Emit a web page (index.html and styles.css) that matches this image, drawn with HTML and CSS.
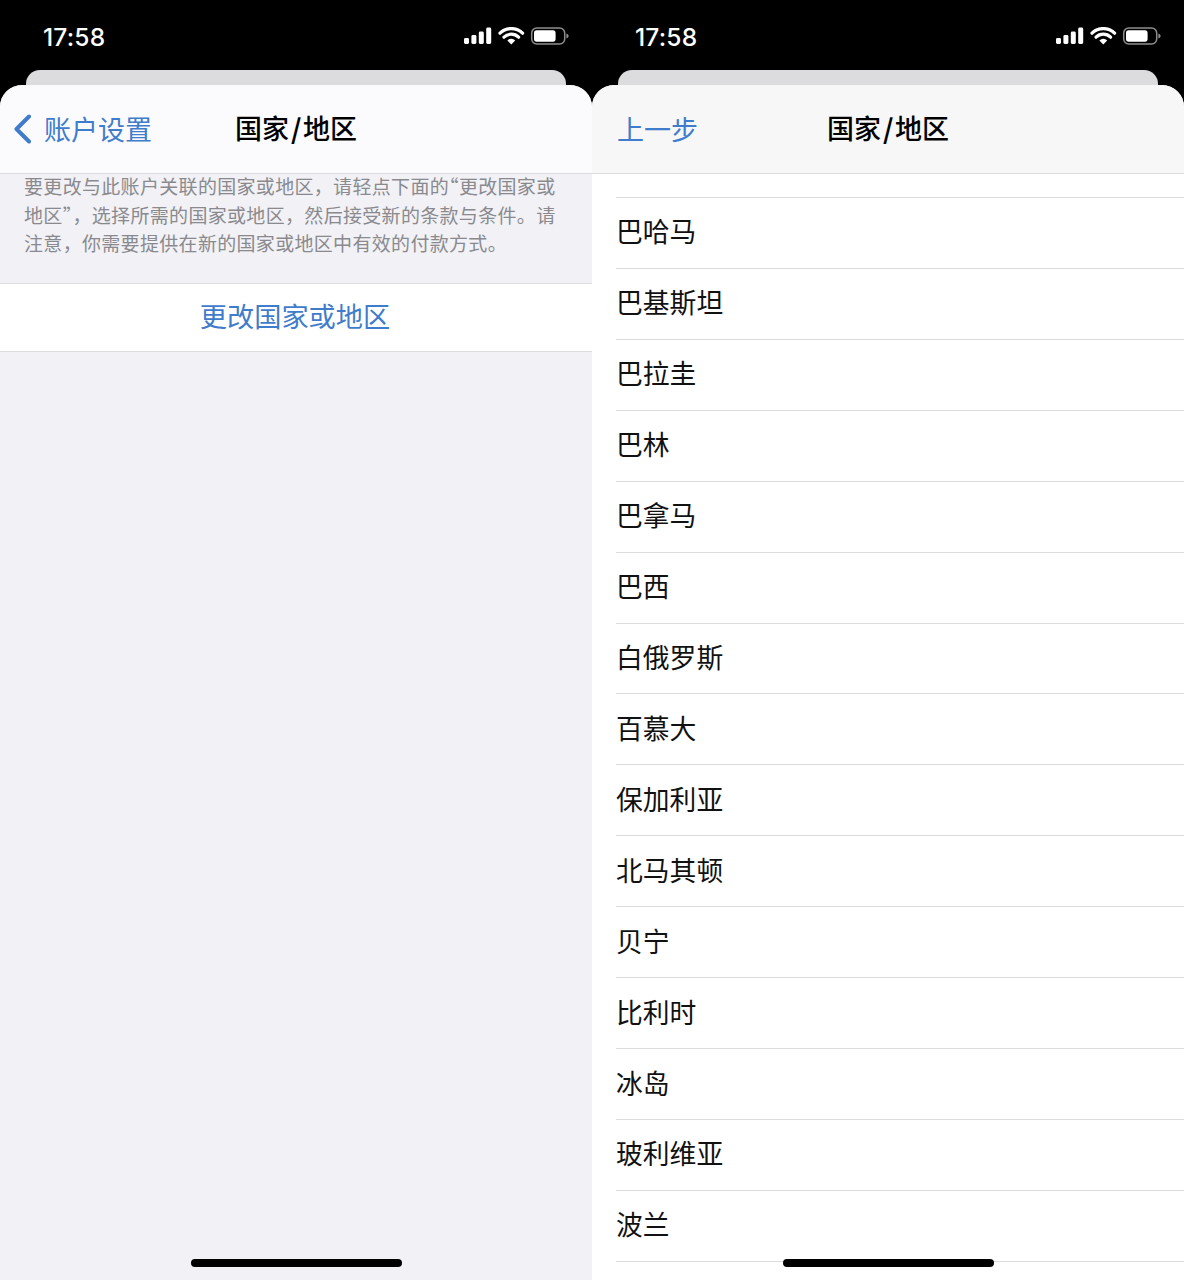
FILE: index.html
```html
<!DOCTYPE html>
<html lang="zh-CN">
<head>
<meta charset="utf-8">
<title>国家/地区</title>
<link rel="stylesheet" href="styles.css">
</head>
<body>
<svg class="defs" width="0" height="0" aria-hidden="true">
  <symbol id="status" viewBox="0 0 106 18">
    <rect x="0" y="11" width="5" height="6" rx="1.4" fill="#fff"/>
    <rect x="7.4" y="8" width="5" height="9" rx="1.4" fill="#fff"/>
    <rect x="14.8" y="4.5" width="5" height="12.5" rx="1.4" fill="#fff"/>
    <rect x="22.2" y="0.5" width="5" height="16.5" rx="1.4" fill="#fff"/>
    <path d="M36 6.2a16 16 0 0 1 22.6 0" fill="none" stroke="#fff" stroke-width="3.2" stroke-linecap="round"/>
    <path d="M40 10.2a10.4 10.4 0 0 1 14.6 0" fill="none" stroke="#fff" stroke-width="3.2" stroke-linecap="round"/>
    <path d="M47.3 17.6l-3.9-4.2a5.6 5.6 0 0 1 7.8 0z" fill="#fff"/>
    <rect x="67.7" y="1" width="33" height="16" rx="5" fill="none" stroke="#8e8e8e" stroke-width="1.5"/>
    <rect x="70" y="3.300" width="21.600" height="11.400" rx="2.600" fill="#fff"/>
    <path d="M102.400 6.500c1.400.4 2.200 1.400 2.200 2.500s-.8 2.100-2.200 2.500z" fill="#8e8e8e"/>
  </symbol>
</svg>
<main class="screens">
  <section class="phone">
    <header class="status"><span class="time">17:58</span><svg class="status-icons"><use href="#status"/></svg></header>
    <div class="card-behind"></div>
    <div class="sheet sheet-grouped">
      <nav class="nav nav-light">
        <a class="back"><svg class="chevron" viewBox="0 0 19 30"><path d="M16 2.500L3.500 15 16 27.500" fill="none" stroke="#3f7ccb" stroke-width="4" stroke-linecap="round" stroke-linejoin="round"/></svg><span class="back-label">账户设置</span></a>
        <h1 class="title">国家<span class="slash">/</span>地区</h1>
      </nav>
      <p class="note"><span class="line">要更改与此账户关联的国家或地区，请轻点下面的<span class="quote">“</span>更改国家或</span><span class="line">地区<span class="quote">”</span>，选择所需的国家或地区，然后接受新的条款与条件。请</span><span class="line">注意，你需要提供在新的国家或地区中有效的付款方式。</span></p>
      <div class="action">更改国家或地区</div>
      <div class="home"></div>
    </div>
  </section>
  <section class="phone">
    <header class="status"><span class="time">17:58</span><svg class="status-icons"><use href="#status"/></svg></header>
    <div class="card-behind"></div>
    <div class="sheet">
      <nav class="nav nav-grey">
        <a class="prev">上一步</a>
        <h1 class="title">国家<span class="slash">/</span>地区</h1>
      </nav>
      <ul class="list">
        <li class="row row-cut"></li>
        <li class="row">巴哈马</li>
        <li class="row">巴基斯坦</li>
        <li class="row">巴拉圭</li>
        <li class="row">巴林</li>
        <li class="row">巴拿马</li>
        <li class="row">巴西</li>
        <li class="row">白俄罗斯</li>
        <li class="row">百慕大</li>
        <li class="row">保加利亚</li>
        <li class="row">北马其顿</li>
        <li class="row">贝宁</li>
        <li class="row">比利时</li>
        <li class="row">冰岛</li>
        <li class="row">玻利维亚</li>
        <li class="row">波兰</li>
      </ul>
      <div class="home"></div>
    </div>
  </section>
</main>
</body>
</html>
```
FILE: styles.css
```css
* { box-sizing: border-box; }
html, body { margin: 0; padding: 0; }
body {
  width: 1184px;
  height: 1280px;
  overflow: hidden;
  background: #000;
  font-family: "Noto Sans CJK SC", "Noto Sans", sans-serif;
}
.defs { position: absolute; }
.screens { display: flex; height: 1280px; }
.phone { width: 592px; display: flex; flex-direction: column; }
.status {
  height: 70px;
  flex: none;
  display: flex;
  justify-content: space-between;
  align-items: flex-start;
  padding: 22px 22px 0 43px;
}
.time {
  font-family: Inter, "Noto Sans", sans-serif;
  font-size: 24.500px;
  font-weight: 500;
  line-height: 30px;
  color: #fff;
  letter-spacing: 0.2px;
}
.status-icons { width: 106px; height: 18px; margin-top: 5px; }
.card-behind {
  height: 15px;
  flex: none;
  margin: 0 26px;
  background: #dcdcde;
  border-radius: 14px 14px 0 0;
}
.sheet {
  position: relative;
  flex: 1;
  min-height: 0;
  overflow: hidden;
  background: #fff;
  border-radius: 22px 22px 0 0;
}
.sheet-grouped { background: #f1f1f6; }
.nav {
  position: relative;
  height: 89px;
  display: flex;
  align-items: center;
  border-bottom: 1px solid #dcdcde;
  padding-bottom: 1px;
}
.nav-light { background: #fbfbfd; }
.nav-grey { background: #f7f7f7; }
.title {
  position: absolute;
  left: 0;
  right: 0;
  top: 24px;
  margin: 0;
  text-align: center;
  font-size: 27px;
  font-weight: 500;
  line-height: 38px;
  color: #000;
}
.slash { margin: 0 1.500px 0 2px; font-weight: 700; }
.back { display: flex; align-items: center; padding-left: 13px; color: #3f7ccb; }
.chevron { width: 19px; height: 30px; flex: none; }
.back-label { margin-left: 12px; font-size: 27px; line-height: 38px; }
.prev { margin-left: 25px; font-size: 27px; line-height: 38px; color: #3f7ccb; }
.note {
  margin: -2px 0 0;
  padding: 0 0 0 24px;
  height: 111px;
  font-size: 19px;
  line-height: 28.500px;
  color: #8a8a8e;
  letter-spacing: 0.32px;
  text-spacing-trim: space-all;
}
.line { display: block; white-space: nowrap; }
.quote { font-feature-settings: "halt" 1; }
.action {
  height: 69px;
  display: flex;
  align-items: center;
  justify-content: center;
  background: #fff;
  border-top: 1px solid #dcdcde;
  border-bottom: 1px solid #dcdcde;
  padding: 0 2px 5px 0;
  font-size: 27.200px;
  color: #3f7ccb;
}
.list { list-style: none; margin: 0; padding: 0 0 0 24px; }
.row {
  height: 70.930px;
  display: flex;
  align-items: center;
  border-bottom: 1px solid #dcdcde;
  padding-bottom: 3px;
  font-size: 26.800px;
  line-height: 38px;
  color: #111;
}
.row-cut { height: 24px; padding: 0; }
.home {
  position: absolute;
  left: 191px;
  bottom: 13px;
  width: 211px;
  height: 8px;
  border-radius: 4px;
  background: #000;
}
```
